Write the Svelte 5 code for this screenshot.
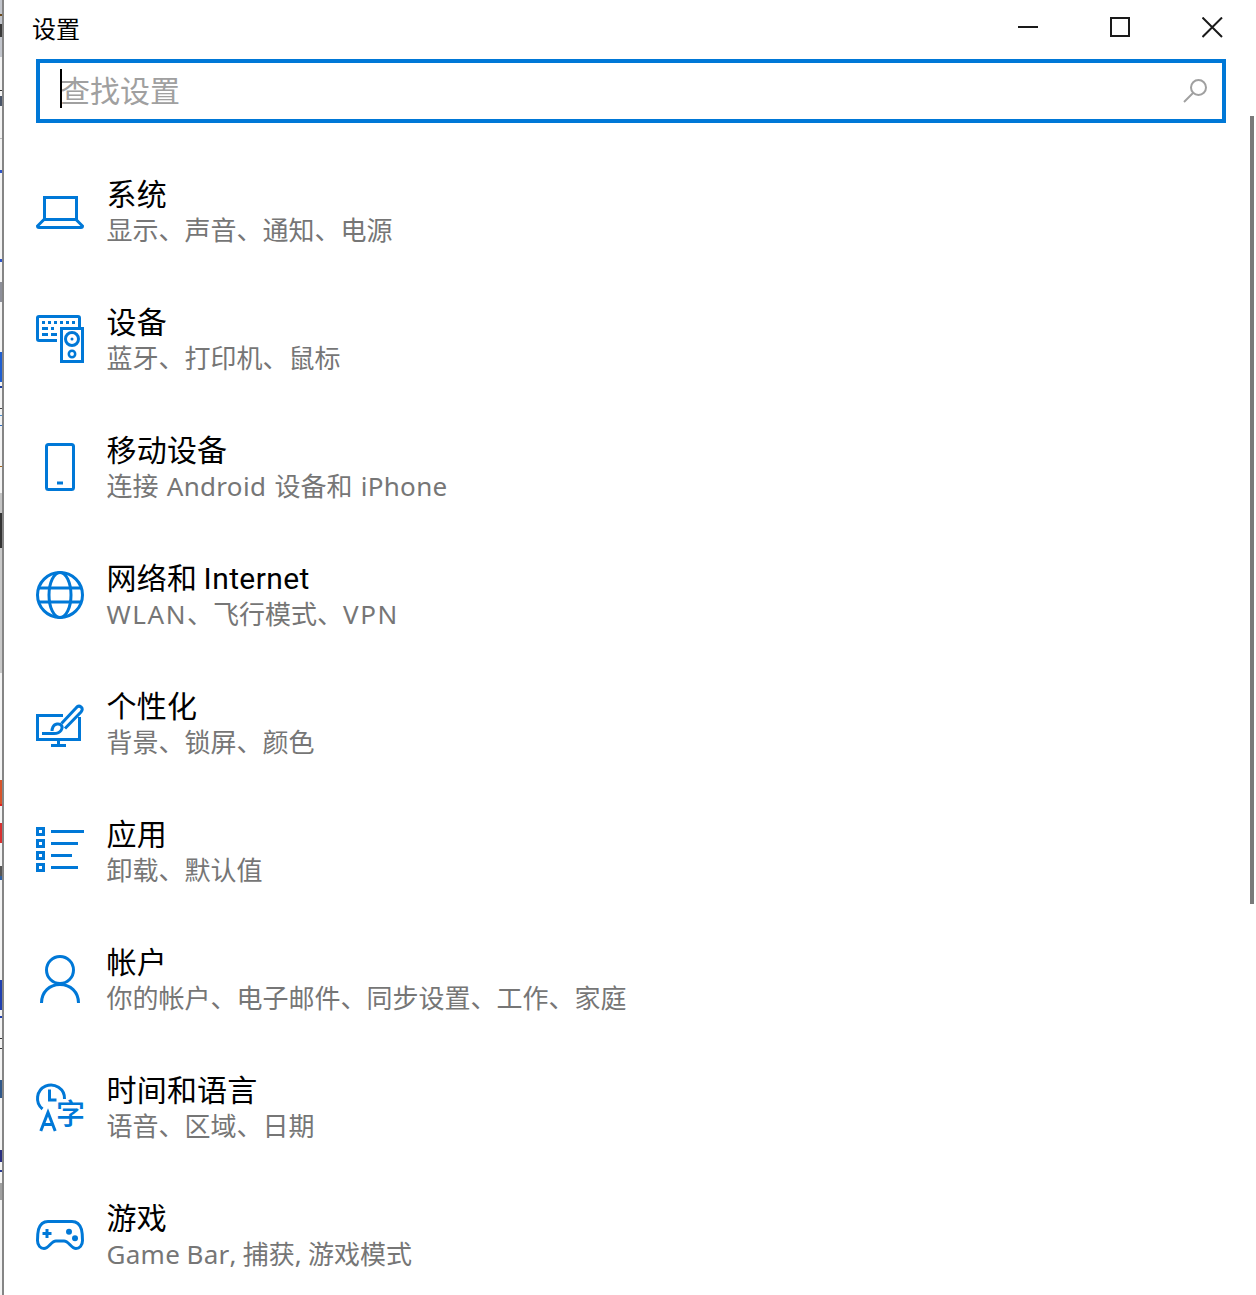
<script>
  const blue = '#0078d7';
  const rows = [
    { id: 'sys', title: '系统', sub: '显示、声音、通知、电源' },
    { id: 'dev', title: '设备', sub: '蓝牙、打印机、鼠标' },
    { id: 'phone', title: '移动设备', sub: '连接 Android 设备和 iPhone' },
    { id: 'net', title: '网络和 Internet', sub: 'WLAN、飞行模式、VPN' },
    { id: 'pers', title: '个性化', sub: '背景、锁屏、颜色' },
    { id: 'apps', title: '应用', sub: '卸载、默认值' },
    { id: 'acct', title: '帐户', sub: '你的帐户、电子邮件、同步设置、工作、家庭' },
    { id: 'time', title: '时间和语言', sub: '语音、区域、日期' },
    { id: 'game', title: '游戏', sub: 'Game Bar, 捕获, 游戏模式', tight: true }
  ];
  const parts = (s) => s.split(/([A-Za-z]+)/).filter(Boolean).map((t) => ({
    t,
    cls: /^[A-Z]+$/.test(t) ? 'latin caps' : /^[A-Za-z]+$/.test(t) ? 'latin' : ''
  }));
  // Slivers of the window behind, visible at the left edge: [top, height, colour]
  const slivers = [
    [0, 57, '#c2c5cc'], [14, 2, '#6b4a1e'], [24, 13, '#3a3a3a'], [90, 1, '#333'], [96, 10, '#4a5568'],
    [138, 1, '#bbb'], [170, 3, '#2f55c8'], [259, 3, '#2f55c8'], [282, 20, '#8d8f99'],
    [352, 30, '#1f5fd0'], [386, 2, '#1c3fa0'], [408, 1, '#444'], [415, 1, '#4a90d0'], [425, 1, '#2d6cc0'],
    [466, 1, '#a5661f'], [493, 20, '#c4c4c4'], [513, 35, '#333333'], [548, 125, '#c9c9c9'],
    [780, 24, '#d8542a'], [804, 2, '#e02020'], [823, 20, '#d83030'], [866, 10, '#555'], [876, 4, '#2d5fa0'],
    [980, 30, '#2040b0'], [1016, 2, '#2040b0'], [1038, 1, '#333'], [1048, 1, '#333'],
    [1080, 18, '#30588a'], [1150, 12, '#2a2f80'], [1170, 2, '#2a3a90'], [1183, 17, '#a0a0a0']
  ];
</script>

<div class="screen">
  <div class="behind">
    {#each slivers as [top, height, color]}
      <i class="sliver" style="top:{top}px;height:{height}px;background:{color}"></i>
    {/each}
  </div>
  <div class="window">
    <header class="titlebar">
      <span class="apptitle">设置</span>
      <div class="controls">
        <svg class="ctl" viewBox="0 0 22 22"><path d="M0 10h20" /></svg>
        <svg class="ctl" viewBox="0 0 22 22"><rect x="1" y="1" width="18" height="18" /></svg>
        <svg class="ctl" viewBox="0 0 22 22"><path d="M.5 .5l19.500 19.500M20 .5L.5 20" /></svg>
      </div>
    </header>
    <div class="search">
      <span class="caret"></span>
      <span class="placeholder">查找设置</span>
      <svg class="lens" viewBox="0 0 26 26"><circle cx="15.500" cy="9.500" r="7.500" /><path d="M10 15L1 24" /></svg>
    </div>
    <ul class="list">
      {#each rows as r}
        <li class="row">
          <svg class="icon" viewBox="0 0 48 48" fill="none" stroke={blue} stroke-width="3">
            {#if r.id === 'sys'}
              <path d="M8.500 10.500h32v22h-32zM8 32.500L1.500 39q0 1.500 1.500 1.500h42q1.500 0 1.500-1.500L40 32.500" />
            {:else if r.id === 'dev'}
              <path d="M21 25.500H3q-1.500 0-1.500-1.500V3q0-1.500 1.500-1.500h39q1.500 0 1.500 1.500v9" />
              <path d="M6 7.500h3M12 7.500h3M18 7.500h3M24 7.500h3M30 7.500h3M36 7.500h3M6 13.500h6M15 13.500h3M6 19.500h6M15 19.500h6" />
              <rect x="25.500" y="13.500" width="21" height="33" />
              <circle cx="36" cy="24" r="6.500" />
              <circle cx="36" cy="24" r="1.500" fill={blue} stroke="none" />
              <circle cx="36" cy="39" r="3.200" stroke-width="2.500" />
            {:else if r.id === 'phone'}
              <rect x="10.500" y="1.500" width="27" height="45" rx="2" />
              <path d="M21 40h6" />
            {:else if r.id === 'net'}
              <circle cx="24" cy="24" r="22.500" />
              <ellipse cx="24" cy="24" rx="11" ry="22.500" />
              <path d="M3 17h42M3 31h42" />
            {:else if r.id === 'pers'}
              <path d="M27 16.500H1.500v24h42V18" />
              <path d="M15 46.500h15M22.500 40.500v6" />
              <path d="M25.500 24.500L40 9q2.500-3 5-1 2.500 2 0 5L29 29.500" />
              <path d="M6 34.500h12q5 0 7-3 2-3 .5-5-1.500-2-4.500-1.500-3 .5-4 3-1 2-1 4" />
            {:else if r.id === 'apps'}
              <rect x="1.500" y="1.500" width="6" height="6" />
              <rect x="1.500" y="13.500" width="6" height="6" />
              <rect x="1.500" y="25.500" width="6" height="6" />
              <rect x="1.500" y="37.500" width="6" height="6" />
              <path d="M15 4.500h33M15 16.500h27M15 28.500h21M15 40.500h27" />
            {:else if r.id === 'acct'}
              <circle cx="24" cy="15" r="13.500" />
              <path d="M5.500 48c0-11 8-18.500 18.500-18.500s18.500 7.500 18.500 18.500" />
            {:else if r.id === 'time'}
              <path d="M6.500 26A13.500 13.500 0 1 1 28.500 16" />
              <path d="M13.500 6.500v10.500h7" />
              <path d="M4.800 48L12 29.500L19.200 48M7 41.500h10" />
              <text class="zi" x="20" y="42" stroke="none" fill={blue}>字</text>
            {:else}
              <path d="M12 10.500h24c5 0 8 3 9.500 8 1 4 1 8 1 11 0 5-3 8-6.500 8-5 0-7-7.500-12-7.500H20c-5 0-7 7.500-12 7.500-3.500 0-6.500-3-6.500-8 0-3 0-7 1-11 1.500-5 4.500-8 9.500-8z" />
              <path d="M6.500 22.500h9M11 18v9" />
              <circle cx="33" cy="20.700" r="3" fill={blue} stroke="none" />
              <circle cx="39" cy="27.300" r="3" fill={blue} stroke="none" />
            {/if}
          </svg>
          <div class="text">
            <div class="title">{#each parts(r.title) as p}<span class={p.cls}>{p.t}</span>{/each}</div>
            <div class="sub" class:tight={r.tight}>{#each parts(r.sub) as p}<span class={p.cls}>{p.t}</span>{/each}</div>
          </div>
        </li>
      {/each}
    </ul>
    <div class="scrollbar"></div>
  </div>
</div>

<style>
  :global(body) { margin: 0; background: #fff; }
  .screen {
    width: 1256px; height: 1295px; overflow: hidden; display: flex; position: relative;
    font-family: "Noto Sans", "Noto Sans CJK SC", sans-serif;
  }
  .behind { width: 2px; flex: none; background: #f4f4f4; position: relative; }
  .sliver { position: absolute; left: 0; width: 2px; }
  .window { flex: 1; border-left: 2px solid #858585; position: relative; background: #fff; }
  .titlebar { height: 59px; display: flex; justify-content: space-between; padding-left: 28px; }
  .apptitle { font-size: 24px; line-height: 57px; color: #000; }
  .controls { display: flex; gap: 70px; padding: 17px 32px 0 0; }
  .ctl { width: 22px; height: 22px; fill: none; stroke: #1a1a1a; stroke-width: 2; }
  .search {
    margin-left: 32px; width: 1190px; height: 64px; box-sizing: border-box; border: 4px solid #0078d7;
    display: flex; align-items: center; padding: 0 13px 0 20px; position: relative;
  }
  .caret { position: absolute; left: 20px; top: 6px; width: 2px; height: 39px; background: #000; }
  .placeholder { flex: 1; font-size: 30px; color: #a0a0a0; padding-bottom: 4px; }
  .lens { width: 26px; height: 26px; fill: none; stroke: #a0a0a0; stroke-width: 2; }
  .list { list-style: none; margin: 0; padding: 24px 0 0 32px; }
  .row { height: 128px; display: flex; align-items: center; gap: 22.5px; }
  .icon { width: 48px; height: 48px; flex: none; overflow: visible; }
  .zi { font-size: 29px; font-weight: 500; font-family: "Noto Sans CJK SC", sans-serif; }
  .text { margin-top: -2px; }
  .title { font-size: 30px; line-height: 39px; color: #000; word-spacing: -1.5px; letter-spacing: .2px; }
  .title .latin { font-family: Roboto, sans-serif; font-weight: 400; letter-spacing: .4px; line-height: 0; }
  .sub { font-size: 26px; line-height: 34px; color: #767676; word-spacing: 1.5px; }
  .sub.tight { word-spacing: -.5px; }
  .sub .latin { letter-spacing: .3px; }
  .sub .caps { letter-spacing: 1.6px; }
  .scrollbar { position: absolute; right: 2px; top: 116px; width: 4px; height: 788px; background: #7a7a7a; }
</style>
